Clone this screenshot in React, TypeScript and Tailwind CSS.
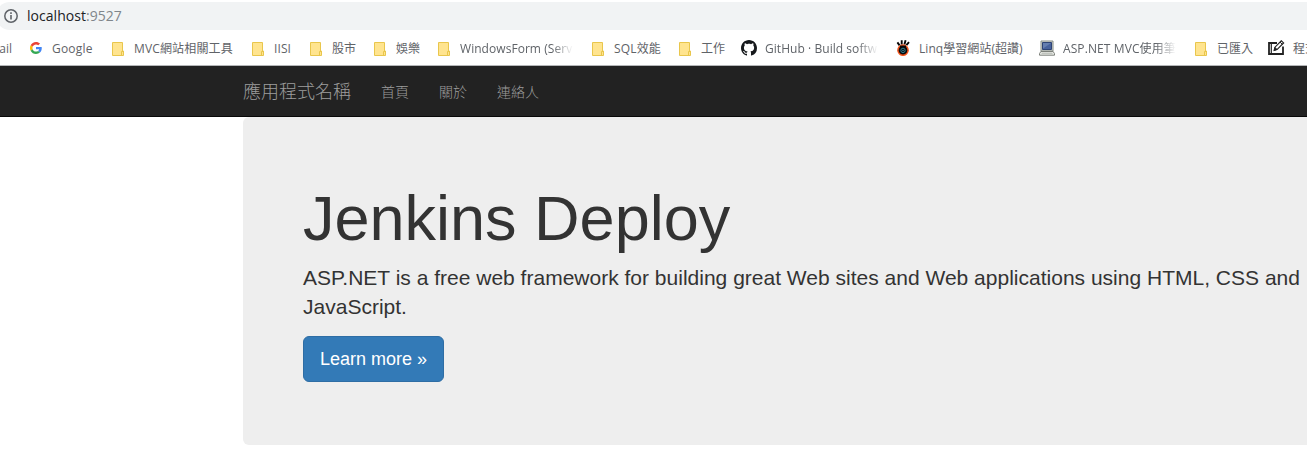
import type { ReactNode } from 'react';

const FolderIcon = () => (
  <svg width="12" height="14" viewBox="0 0 12 14" className="mt-px shrink-0">
    <path d="M.5.5h10v8.5h1v4.5H.5z" fill="#ffe48f" stroke="#e9c64c" />
    <path d="M9.5 13.5V9.5h1.5" fill="none" stroke="#e9c64c" />
  </svg>
);

const GoogleIcon = () => (
  <svg width="12" height="12" viewBox="0 0 48 48" className="shrink-0">
    <path fill="#EA4335" d="M24 9.5c3.54 0 6.71 1.22 9.21 3.6l6.85-6.85C35.9 2.38 30.47 0 24 0 14.62 0 6.51 5.38 2.56 13.22l7.98 6.19C12.43 13.72 17.74 9.5 24 9.5z" />
    <path fill="#4285F4" d="M46.98 24.55c0-1.57-.15-3.09-.38-4.55H24v9.02h12.94c-.58 2.96-2.26 5.48-4.78 7.18l7.73 6c4.51-4.18 7.09-10.36 7.09-17.65z" />
    <path fill="#FBBC05" d="M10.53 28.59c-.48-1.45-.76-2.99-.76-4.59s.27-3.14.76-4.59l-7.98-6.19C.92 16.46 0 20.12 0 24s.92 7.54 2.56 10.78l7.97-6.19z" />
    <path fill="#34A853" d="M24 48c6.48 0 11.93-2.13 15.89-5.81l-7.73-6c-2.15 1.45-4.92 2.3-8.16 2.3-6.26 0-11.57-4.22-13.47-9.91l-7.98 6.19C6.51 42.62 14.62 48 24 48z" />
  </svg>
);

const GitHubIcon = () => (
  <svg width="16" height="16" viewBox="0 0 16 16" className="shrink-0" fill="#16191c">
    <path d="M8 0C3.58 0 0 3.58 0 8c0 3.54 2.29 6.53 5.47 7.59.4.07.55-.17.55-.38 0-.19-.01-.82-.01-1.49-2.01.37-2.53-.49-2.69-.94-.09-.23-.48-.94-.82-1.13-.28-.15-.68-.52-.01-.53.63-.01 1.08.58 1.23.82.72 1.21 1.87.87 2.33.66.07-.52.28-.87.51-1.07-1.78-.2-3.64-.89-3.64-3.95 0-.87.31-1.59.82-2.15-.08-.2-.36-1.02.08-2.12 0 0 .67-.21 2.2.82.64-.18 1.32-.27 2-.27s1.36.09 2 .27c1.53-1.04 2.2-.82 2.2-.82.44 1.1.16 1.92.08 2.12.51.56.82 1.27.82 2.15 0 3.07-1.87 3.75-3.65 3.95.29.25.54.73.54 1.48 0 1.07-.01 1.93-.01 2.2 0 .21.15.46.55.38A8.01 8.01 0 0 0 16 8c0-4.42-3.58-8-8-8z" />
  </svg>
);

const EyeIcon = () => (
  <svg width="16" height="16" viewBox="0 0 16 16" className="shrink-0">
    <path d="M2.4 2.4 4.6 5.4M6.7.2v4.2M10.6.2 9.4 4.4M14 2.2 11.4 5.2" stroke="#050505" strokeWidth="1.9" />
    <circle cx="8" cy="10.2" r="5.1" fill="#08090b" stroke="#f4551c" strokeWidth="1.5" />
    <path d="M5 6.6h6" stroke="#08090b" strokeWidth="2" />
    <circle cx="8" cy="10.4" r="2.2" fill="#08161c" stroke="#2f7f90" />
    <path d="M7.5 9.9h1v1h-1z" fill="#5bb8c8" />
  </svg>
);

const LaptopIcon = () => (
  <svg width="16" height="16" viewBox="0 0 16 16" className="shrink-0">
    <path d="M2 1h12v10H2z" fill="#d9ddda" stroke="#858b84" />
    <path d="M3.5 2.5h9v7h-9z" fill="#46619c" stroke="#2d4375" />
    <path d="m4 8.5 8-5.5H4z" fill="#647eb0" />
    <path d="M1.8 11.5h12.4l1.3 2.2v1.5H.5v-1.5z" fill="#eceeea" stroke="#7c807a" />
    <path d="M2.5 13.2h11" stroke="#afb3ac" />
  </svg>
);

const TabletIcon = () => (
  <svg width="17" height="16" viewBox="0 0 17 16" className="shrink-0" fill="none" stroke="#222">
    <path d="M9 3H1v11h14V6.5" strokeWidth="1.8" />
    <path d="M3.3 3v11" strokeWidth="1.2" />
    <path d="m6.2 10.4.8-3.2 6.3-6.4 2.3 2.1-6.3 6.4z" fill="#fff" strokeWidth="1.2" />
    <path d="m12 2.1 2.3 2.2M7 7.5l2 2-2.8.9z" fill="#222" />
  </svg>
);

type Bookmark = { icon: ReactNode; label: string; slot: string; text: string };

const fade = 'w-[113px] overflow-hidden [mask-image:linear-gradient(to_right,black_82%,transparent)]';

const bookmarks: Bookmark[] = [
  { icon: <GoogleIcon />, label: 'Google', slot: 'w-[82px] gap-[10px]', text: 'tracking-[0.2px]' },
  { icon: <FolderIcon />, label: 'MVC網站相關工具', slot: 'w-[140px] gap-[10px]', text: 'tracking-[0.15px]' },
  { icon: <FolderIcon />, label: 'IISI', slot: 'w-[58px] gap-[10px]', text: 'tracking-[0.1px]' },
  { icon: <FolderIcon />, label: '股市', slot: 'w-[64px] gap-[10px]', text: '' },
  { icon: <FolderIcon />, label: '娛樂', slot: 'w-[64px] gap-[10px]', text: '' },
  { icon: <FolderIcon />, label: 'WindowsForm (Server)', slot: 'w-[154px] gap-[10px]', text: `${fade} tracking-[0.05px]` },
  { icon: <FolderIcon />, label: 'SQL效能', slot: 'w-[87px] gap-[10px]', text: 'tracking-[0.15px]' },
  { icon: <FolderIcon />, label: '工作', slot: 'w-[62px] gap-[10px]', text: '' },
  { icon: <GitHubIcon />, label: 'GitHub · Build software', slot: 'w-[154px] gap-[8px]', text: `${fade} tracking-[0.05px]` },
  { icon: <EyeIcon />, label: 'Linq學習網站(超讚)', slot: 'w-[144px] gap-[8px]', text: 'tracking-[0.05px]' },
  { icon: <LaptopIcon />, label: 'ASP.NET MVC使用筆記', slot: 'w-[156px] gap-[8px]', text: `${fade} tracking-[0.1px]` },
  { icon: <FolderIcon />, label: '已匯入', slot: 'w-[73px] gap-[10px]', text: '' },
  { icon: <TabletIcon />, label: '程式', slot: 'w-[60px] gap-[8px]', text: '' },
];

export default function App() {
  return (
    <div className="h-[466px] overflow-hidden bg-white font-['Liberation_Sans','Noto_Sans_CJK_TC',sans-serif] text-[#333]">
      <header className="h-[66px] border-b border-[#b4b6b8] pt-[2px] font-['Open_Sans','Noto_Sans_CJK_TC',sans-serif]">
        <div className="-ml-1 flex h-7 items-center rounded-l-full bg-[#f1f3f4] pl-2">
          <svg width="14" height="14" viewBox="0 0 14 14" className="shrink-0" fill="none" stroke="#5f6368">
            <circle cx="7" cy="7" r="6.2" strokeWidth="1.5" />
            <path d="M7 6v4.5M7 3.3v1.6" strokeWidth="1.6" />
          </svg>
          <span className="ml-[9px] text-[14px] leading-7 tracking-[0.04px] text-[#202124]">
            localhost<span className="text-[#80868b]">:9527</span>
          </span>
        </div>
        <nav className="flex h-9 items-center whitespace-nowrap text-[12px] leading-[18px] text-[#5f6368]">
          <span className="flex w-[30px] shrink-0 justify-end pt-[2px] pr-[18px]">Gmail</span>
          {bookmarks.map(({ icon, label, slot, text }) => (
            <a key={label} className={`flex shrink-0 items-center ${slot}`}>
              {icon}
              <span className={`shrink-0 pt-[2px] ${text}`}>{label}</span>
            </a>
          ))}
        </nav>
      </header>
      <nav className="flex h-[51px] items-center border-b border-[#080808] bg-[#222] pt-[2px] pl-[243px] font-light text-[#9d9d9d]">
        <a className="w-[138px] text-[18px] leading-5">應用程式名稱</a>
        <a className="w-[58px] text-[14px] leading-5">首頁</a>
        <a className="w-[58px] text-[14px] leading-5">關於</a>
        <a className="text-[14px] leading-5">連絡人</a>
      </nav>
      <main className="ml-[243px] h-[328px] w-[1140px] rounded-[6px] bg-[#eee] px-[60px] pt-[67px]">
        <h1 className="text-[63px] leading-[69px]">Jenkins Deploy</h1>
        <p className="mt-[10px] text-[21px] leading-[29.4px] tracking-[0.005px]">
          ASP.NET is a free web framework for building great Web sites and Web applications using HTML, CSS and JavaScript.
        </p>
        <a className="mt-[14px] inline-flex h-[46px] w-[141px] items-center justify-center rounded-[6px] border border-[#2e6da4] bg-[#337ab7] pt-[2px] text-[18px] text-white">
          Learn more »
        </a>
      </main>
    </div>
  );
}
